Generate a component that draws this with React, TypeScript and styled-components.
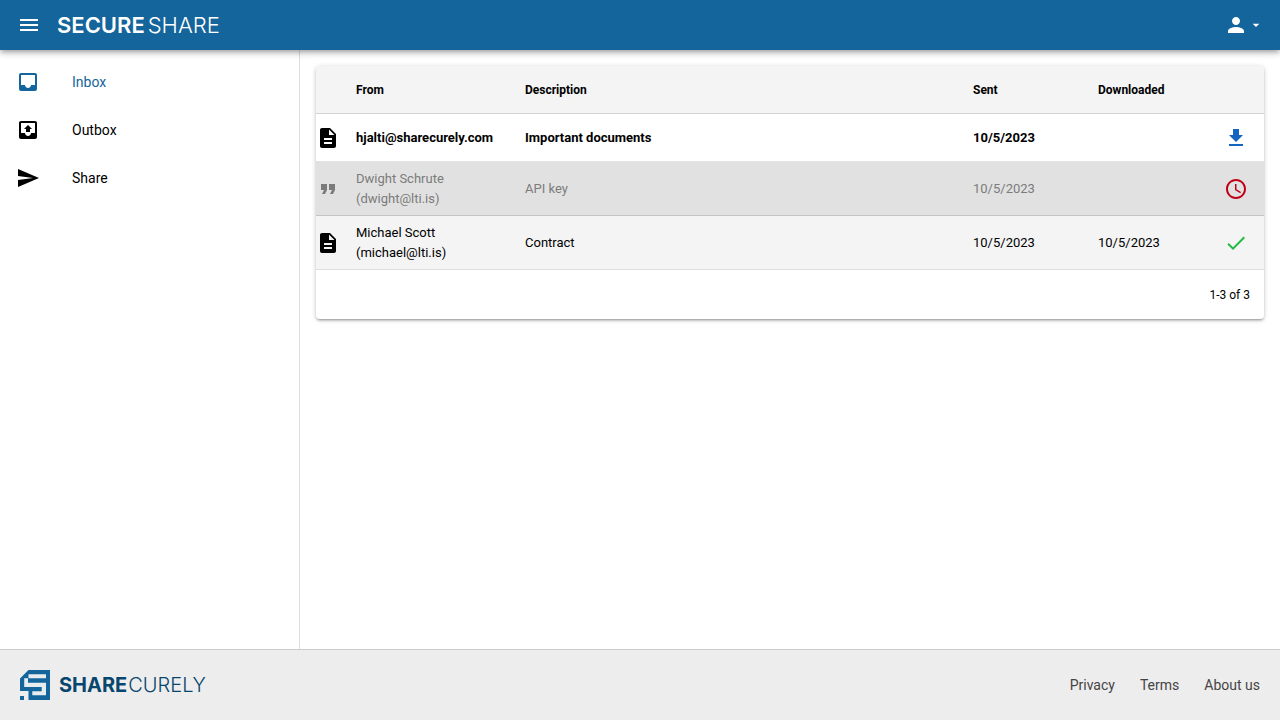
import React from 'react';
import styled, { createGlobalStyle, css } from 'styled-components';

const GlobalStyle = createGlobalStyle`
  *, *::before, *::after { box-sizing: border-box; }
  body {
    margin: 0;
    background: #fff;
    color: #000;
    font-family: Roboto, "Liberation Sans", sans-serif;
    font-size: 14px;
    line-height: 20px;
  }
  a { color: inherit; text-decoration: none; }
`;

const Page = styled.div`
  display: flex;
  flex-direction: column;
  min-height: 100vh;
`;

const Header = styled.header`
  position: sticky;
  top: 0;
  z-index: 2;
  display: flex;
  align-items: center;
  justify-content: space-between;
  height: 50px;
  padding: 0 16px;
  background: #14659b;
  color: #fff;
  box-shadow: 0 2px 4px -1px rgba(0, 0, 0, 0.2), 0 4px 5px rgba(0, 0, 0, 0.14), 0 1px 10px rgba(0, 0, 0, 0.12);
`;

const Brand = styled.div`
  display: flex;
  align-items: center;
  gap: 16px;
  padding-left: 1px;
`;

const BarButton = styled.button`
  display: flex;
  align-items: center;
  padding: 0;
  border: 0;
  background: none;
  color: inherit;
  cursor: pointer;
`;

const Wordmark = styled.span<{ $size: number; $gap: number; $weight: number }>`
  display: flex;
  gap: ${(p) => p.$gap}px;
  font-family: Inter, Lato, sans-serif;
  font-size: ${(p) => p.$size}px;
  font-weight: 300;
  line-height: 24px;

  strong { font-weight: ${(p) => p.$weight}; }
`;

const Body = styled.div`
  display: flex;
  flex: 1;
`;

const Sidebar = styled.nav`
  flex: 0 0 300px;
  padding-top: 8px;
  border-right: 1px solid #ddd;
`;

const NavItem = styled.a<{ $active?: boolean }>`
  display: flex;
  align-items: center;
  gap: 32px;
  height: 48px;
  padding: 0 16px;
  && { color: ${(p) => (p.$active ? '#14659b' : '#000')}; }
`;

const Main = styled.main`
  flex: 1;
  min-width: 0;
  padding: 16px;
`;

const Card = styled.section`
  overflow: hidden;
  border-radius: 4px;
  background: #fff;
  box-shadow: 0 1px 5px rgba(0, 0, 0, 0.2), 0 2px 2px rgba(0, 0, 0, 0.14), 0 3px 1px -2px rgba(0, 0, 0, 0.12);
`;

const Table = styled.table`
  width: 100%;
  border-collapse: separate;
  border-spacing: 0;
  table-layout: fixed;
  font-size: 13px;
`;

const Col = styled.col<{ $width?: number }>`
  ${(p) => p.$width && css`width: ${p.$width}px;`}
`;

const HeadCell = styled.th`
  height: 48px;
  padding: 0 16px;
  border-bottom: 1px solid #d4d4d4;
  background: #f4f4f4;
  font-size: 12px;
  font-weight: 700;
  text-align: left;
`;

type Tone = 'unread' | 'expired' | 'read';

const tones = {
  unread: css`background: #fff; font-weight: 700; --line: #e2e2e2;`,
  expired: css`background: #e1e1e1; color: #7b7b7b; --line: #c4c4c4;`,
  read: css`background: #f4f4f4; --line: #dedede;`,
};

const Row = styled.tr<{ $tone: Tone }>`
  ${(p) => tones[p.$tone]}
`;

const Cell = styled.td`
  height: 48px;
  padding: 7px 16px 6px;
  border-bottom: 1px solid var(--line);
`;

const TypeCell = styled(Cell)`
  padding: 0;
`;

const StatusCell = styled(Cell)`
  padding: 0 16px 0 0;

  ${BarButton} { margin-left: auto; }
`;

const Line = styled.div``;

const Pager = styled.div`
  display: flex;
  align-items: center;
  justify-content: flex-end;
  height: 49px;
  padding: 0 14px;
  font-size: 12px;
`;

const Footer = styled.footer`
  display: flex;
  align-items: center;
  justify-content: space-between;
  height: 71px;
  padding: 0 20px;
  border-top: 1px solid #ccc;
  background: #ededed;
`;

const Company = styled.a`
  display: flex;
  align-items: center;
  gap: 9px;
  && { color: #07466e; }
`;

const Links = styled.nav`
  display: flex;
  gap: 25px;
  color: #444;
`;

const Svg = styled.svg`
  display: block;
  fill: currentColor;
`;

const paths = {
  menu: 'M3 18h18v-2H3v2zm0-5h18v-2H3v2zm0-7v2h18V6H3z',
  inbox: 'M19 3H5c-1.1 0-2 .9-2 2v14c0 1.1.9 2 2 2h14c1.1 0 2-.9 2-2V5c0-1.1-.9-2-2-2zm0 12h-4c0 1.66-1.35 3-3 3s-3-1.34-3-3H5V5h14v10z',
  outbox: 'M19 3H5c-1.1 0-2 .9-2 2v14c0 1.1.9 2 2 2h14c1.1 0 2-.9 2-2V5c0-1.1-.9-2-2-2zm0 12h-4c0 1.66-1.35 3-3 3s-3-1.34-3-3H5V5h14v10zM8 11h2v3h4v-3h2l-4-4z',
  send: 'M2.01 21L23 12 2.01 3 2 10l15 2-15 2z',
  person: 'M12 12c2.21 0 4-1.79 4-4s-1.79-4-4-4-4 1.79-4 4 1.79 4 4 4zm0 2c-2.67 0-8 1.34-8 4v2h16v-2c0-2.66-5.33-4-8-4z',
  caret: 'M7 10l5 5 5-5z',
  file: 'M14 2H6c-1.1 0-1.99.9-1.99 2L4 20c0 1.1.89 2 1.99 2H18c1.1 0 2-.9 2-2V8l-6-6zm2 16H8v-2h8v2zm0-4H8v-2h8v2zm-3-5V3.5L18.5 9H13z',
  quote: 'M6 17h3l2-4V7H5v6h3zm8 0h3l2-4V7h-6v6h3z',
  download: 'M19 9h-4V3H9v6H5l7 7 7-7zM5 18v2h14v-2H5z',
  clock: 'M11.99 2C6.47 2 2 6.48 2 12s4.47 10 9.99 10C17.52 22 22 17.52 22 12S17.52 2 11.99 2zM12 20c-4.42 0-8-3.58-8-8s3.58-8 8-8 8 3.58 8 8-3.58 8-8 8zm.5-13H11v6l5.25 3.15.75-1.23-4.5-2.67z',
  check: 'M9 16.17L4.83 12l-1.42 1.41L9 19 21 7l-1.41-1.41z',
};

type IconName = keyof typeof paths;

const Icon = ({ name, size = 24, color }: { name: IconName; size?: number; color?: string }) => (
  <Svg width={size} height={size} viewBox="0 0 24 24" color={color} aria-hidden="true">
    <path d={paths[name]} />
  </Svg>
);

const LogoMark = () => (
  <Svg width="30" height="30" viewBox="0 0 30 30" aria-hidden="true">
    <path fill="#14659b" d="M8.500 0H30V30H8.500V21H0V8.500z" />
    <path fill="#14659b" d="M0 26H4V30H0z" />
    <path fill="#e6ecf0" d="M8.500 4.300H26V8.300H8V12.700H26V25.300H12.300V21.300H21.700V17H4.200V8.300H8.500z" />
  </Svg>
);

const navigation: { label: string; icon: IconName; active?: boolean }[] = [
  { label: 'Inbox', icon: 'inbox', active: true },
  { label: 'Outbox', icon: 'outbox' },
  { label: 'Share', icon: 'send' },
];

const messages: {
  type: IconName;
  from: string[];
  description: string;
  sent: string;
  downloaded: string;
  tone: Tone;
  status: IconName;
  statusColor: string;
  statusLabel: string;
}[] = [
  { type: 'file', from: ['hjalti@sharecurely.com'], description: 'Important documents', sent: '10/5/2023', downloaded: '', tone: 'unread', status: 'download', statusColor: '#1565c0', statusLabel: 'Download' },
  { type: 'quote', from: ['Dwight Schrute', '(dwight@lti.is)'], description: 'API key', sent: '10/5/2023', downloaded: '', tone: 'expired', status: 'clock', statusColor: '#c10015', statusLabel: 'Expired' },
  { type: 'file', from: ['Michael Scott', '(michael@lti.is)'], description: 'Contract', sent: '10/5/2023', downloaded: '10/5/2023', tone: 'read', status: 'check', statusColor: '#21ba45', statusLabel: 'Downloaded' },
];

export default function App() {
  return (
    <Page>
      <GlobalStyle />
      <Header>
        <Brand>
          <BarButton aria-label="Menu"><Icon name="menu" /></BarButton>
          <Wordmark $size={22} $gap={3} $weight={600}><strong>SECURE</strong><span>SHARE</span></Wordmark>
        </Brand>
        <BarButton aria-label="Account">
          <Icon name="person" />
          <Icon name="caret" size={16} />
        </BarButton>
      </Header>
      <Body>
        <Sidebar aria-label="Main">
          {navigation.map((item) => (
            <NavItem key={item.label} href="#" $active={item.active}>
              <Icon name={item.icon} />
              {item.label}
            </NavItem>
          ))}
        </Sidebar>
        <Main>
          <Card>
            <Table>
              <colgroup>
                <Col $width={24} />
                <Col $width={169} />
                <Col />
                <Col $width={125} />
                <Col $width={111} />
                <Col $width={71} />
              </colgroup>
              <thead>
                <tr>
                  <HeadCell />
                  <HeadCell scope="col">From</HeadCell>
                  <HeadCell scope="col">Description</HeadCell>
                  <HeadCell scope="col">Sent</HeadCell>
                  <HeadCell scope="col">Downloaded</HeadCell>
                  <HeadCell />
                </tr>
              </thead>
              <tbody>
                {messages.map((m) => (
                  <Row key={m.description} $tone={m.tone}>
                    <TypeCell><Icon name={m.type} /></TypeCell>
                    <Cell>{m.from.map((line) => <Line key={line}>{line}</Line>)}</Cell>
                    <Cell>{m.description}</Cell>
                    <Cell>{m.sent}</Cell>
                    <Cell>{m.downloaded}</Cell>
                    <StatusCell>
                      <BarButton aria-label={m.statusLabel}><Icon name={m.status} color={m.statusColor} /></BarButton>
                    </StatusCell>
                  </Row>
                ))}
              </tbody>
            </Table>
            <Pager>1-3 of 3</Pager>
          </Card>
        </Main>
      </Body>
      <Footer>
        <Company href="#">
          <LogoMark />
          <Wordmark $size={20} $gap={1} $weight={700}><strong>SHARE</strong><span>CURELY</span></Wordmark>
        </Company>
        <Links aria-label="Footer">
          <a href="#">Privacy</a>
          <a href="#">Terms</a>
          <a href="#">About us</a>
        </Links>
      </Footer>
    </Page>
  );
}
